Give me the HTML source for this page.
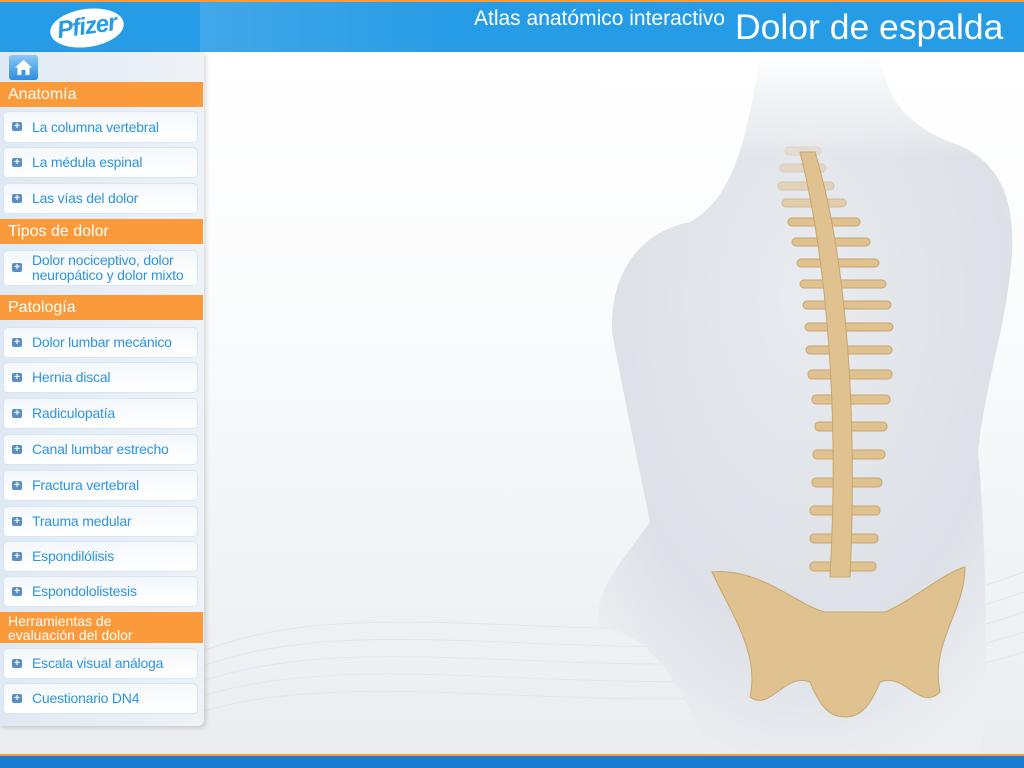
<!DOCTYPE html>
<html><head><meta charset="utf-8"><style>
*{margin:0;padding:0;box-sizing:border-box}
body{width:1024px;height:768px;overflow:hidden;position:relative;background:#eef0f2;font-family:"Liberation Sans","DejaVu Sans",sans-serif}
.main{position:absolute;left:0;top:52px;width:1024px;height:704px;background:linear-gradient(180deg,#fff 0%,#fafbfc 40%,#eaecef 100%)}
.top{position:absolute;left:0;top:0;width:1024px;height:52px;background:#279ce6;border-top:2px solid #f99a3c}
.top .t1{position:absolute;left:474px;top:5px;color:#fff;font-size:21px}
.top .t2{position:absolute;left:735px;top:5px;color:#fff;font-size:35.5px}
.top .hl{position:absolute;left:200px;top:0;width:824px;height:50px;background:linear-gradient(90deg,rgba(255,255,255,.12),rgba(255,255,255,0) 30%)}
.logo{position:absolute;left:50px;top:7px;width:74px;height:38px;background:#fff;border-radius:50%;transform:rotate(-8deg);color:#279ce6;font-weight:bold;font-style:italic;font-size:24px;text-align:center;line-height:36px;letter-spacing:-1px}
.bot{position:absolute;left:0;top:754px;width:1024px;height:14px;background:#1a7cd0;border-top:2px solid #f99a3c}
.side{position:absolute;left:0;top:52px;width:204px;height:674px;background:linear-gradient(90deg,#e0e9f3,#eef2f7);border-radius:0 0 6px 0;box-shadow:2px 2px 5px rgba(0,0,0,.15)}
.home{position:absolute;left:9px;top:55px;width:29px;height:25px;border-radius:3px;background:linear-gradient(#8cc8f5,#2a8de0)}
.h{position:absolute;left:0;width:203px;background:#fb9a3b;color:#fff;font-size:16px;padding-left:8px}
.it{position:absolute;left:3px;width:195px;background:linear-gradient(#f4f8fc,#fff);border:1px solid #d6e6f5;border-radius:5px;color:#2d94de;font-size:14px;padding-left:28px;display:flex;align-items:center;line-height:15px;letter-spacing:-.2px}
.it:before{content:"+";position:absolute;left:8px;top:50%;margin-top:-5px;width:10px;height:9px;background:#5a8fc6;border-radius:2px;color:#fff;font-size:10px;line-height:9px;text-align:center;font-weight:bold}
</style></head><body>
<div class="main">
<svg width="1024" height="704" style="position:absolute;left:0;top:0">
<g fill="none" stroke="#d5e3ef" stroke-width="1" opacity=".7">
<path d="M200 600 C400 520 700 640 1024 520"/><path d="M200 615 C400 540 700 655 1024 540"/><path d="M200 630 C400 560 700 670 1024 560"/><path d="M200 645 C400 580 700 685 1024 580"/><path d="M200 660 C400 600 700 700 1024 600"/></g>
<defs><radialGradient id="b" cx=".5" cy=".35" r=".7"><stop offset="0" stop-color="#e8ebef"/><stop offset=".7" stop-color="#dde1e7"/><stop offset="1" stop-color="#eceef1"/></radialGradient>
<linearGradient id="f" x1="0" y1="0" x2="0" y2="1"><stop offset="0" stop-color="#fff" stop-opacity="1"/><stop offset=".15" stop-color="#fff" stop-opacity="0"/></linearGradient></defs>
<path d="M760 0 L880 0 C885 40 900 70 950 90 C995 105 1015 140 1012 200 C1008 270 985 330 978 400 C985 480 990 600 980 704 L705 704 C690 640 650 580 600 575 C590 540 630 500 650 470 C640 420 625 350 612 280 C610 220 640 180 690 170 C725 150 745 110 760 0Z" fill="url(#b)"/>
<rect x="600" y="0" width="424" height="704" fill="url(#f)"/>
<g fill="#e0c190" stroke="#c7a56f" stroke-width="1">
<rect x="785" y="95" width="36" height="8" rx="4" opacity=".3"/>
<rect x="780" y="112" width="46" height="8" rx="4" opacity=".4"/>
<rect x="778" y="130" width="56" height="8" rx="4" opacity=".55"/>
<rect x="782" y="147" width="64" height="8" rx="4" opacity=".7"/>
<rect x="788" y="166" width="72" height="8" rx="4"/>
<rect x="792" y="186" width="78" height="8" rx="4"/>
<rect x="797" y="207" width="82" height="8" rx="4"/>
<rect x="800" y="228" width="86" height="8" rx="4"/>
<rect x="803" y="249" width="88" height="8" rx="4"/>
<rect x="805" y="271" width="88" height="8" rx="4"/>
<rect x="806" y="294" width="86" height="8" rx="4"/>
<rect x="808" y="318" width="84" height="9" rx="4"/>
<rect x="812" y="343" width="78" height="9" rx="4"/>
<rect x="815" y="370" width="72" height="9" rx="4"/>
<rect x="813" y="398" width="72" height="9" rx="4"/>
<rect x="812" y="426" width="70" height="9" rx="4"/>
<rect x="810" y="454" width="70" height="9" rx="4"/>
<rect x="810" y="482" width="68" height="9" rx="4"/>
<rect x="810" y="510" width="66" height="9" rx="4"/>
<path d="M800 100 C825 200 840 350 830 525 L850 525 C858 350 845 200 815 100Z"/>
<path d="M712 520 C760 515 800 555 825 560 L885 560 C910 550 945 520 965 515 C965 560 930 590 940 640 C920 660 905 620 880 630 C870 655 860 665 845 665 C830 665 820 655 810 630 C785 620 770 660 750 645 C760 600 730 560 712 520Z"/>
</g>
</svg>
</div>
<div class="top"><div class="hl"></div><div class="logo">Pfizer</div><div class="t1">Atlas anatómico interactivo</div><div class="t2">Dolor de espalda</div></div>
<div class="side"></div>
<div class="home"><svg width="29" height="25"><path d="M14.5 5 L23 12.5 L20.5 12.5 L20.5 20 L8.5 20 L8.5 12.5 L6 12.5 Z" fill="#fff"/><rect x="12.5" y="15" width="4" height="5" fill="#3a95e2"/></svg></div>
<div class="h" style="top:82px;height:25px;line-height:25px">Anatomía</div>
<div class="it" style="top:111px;height:32px">La columna vertebral</div>
<div class="it" style="top:147px;height:31px">La médula espinal</div>
<div class="it" style="top:183px;height:31px">Las vías del dolor</div>
<div class="h" style="top:219px;height:25px;line-height:25px">Tipos de dolor</div>
<div class="it" style="top:250px;height:36px">Dolor nociceptivo, dolor neuropático y dolor mixto</div>
<div class="h" style="top:295px;height:25px;line-height:25px">Patología</div>
<div class="it" style="top:327px;height:31px">Dolor lumbar mecánico</div>
<div class="it" style="top:362px;height:31px">Hernia discal</div>
<div class="it" style="top:398px;height:31px">Radiculopatía</div>
<div class="it" style="top:434px;height:31px">Canal lumbar estrecho</div>
<div class="it" style="top:470px;height:31px">Fractura vertebral</div>
<div class="it" style="top:506px;height:31px">Trauma medular</div>
<div class="it" style="top:541px;height:31px">Espondilólisis</div>
<div class="it" style="top:576px;height:31px">Espondololistesis</div>
<div class="h" style="top:612px;height:31px;line-height:14px;font-size:14px;padding-top:2px">Herramientas de<br>evaluación del dolor</div>
<div class="it" style="top:648px;height:31px">Escala visual análoga</div>
<div class="it" style="top:683px;height:31px">Cuestionario DN4</div>
<div class="bot"></div>
</body></html>
